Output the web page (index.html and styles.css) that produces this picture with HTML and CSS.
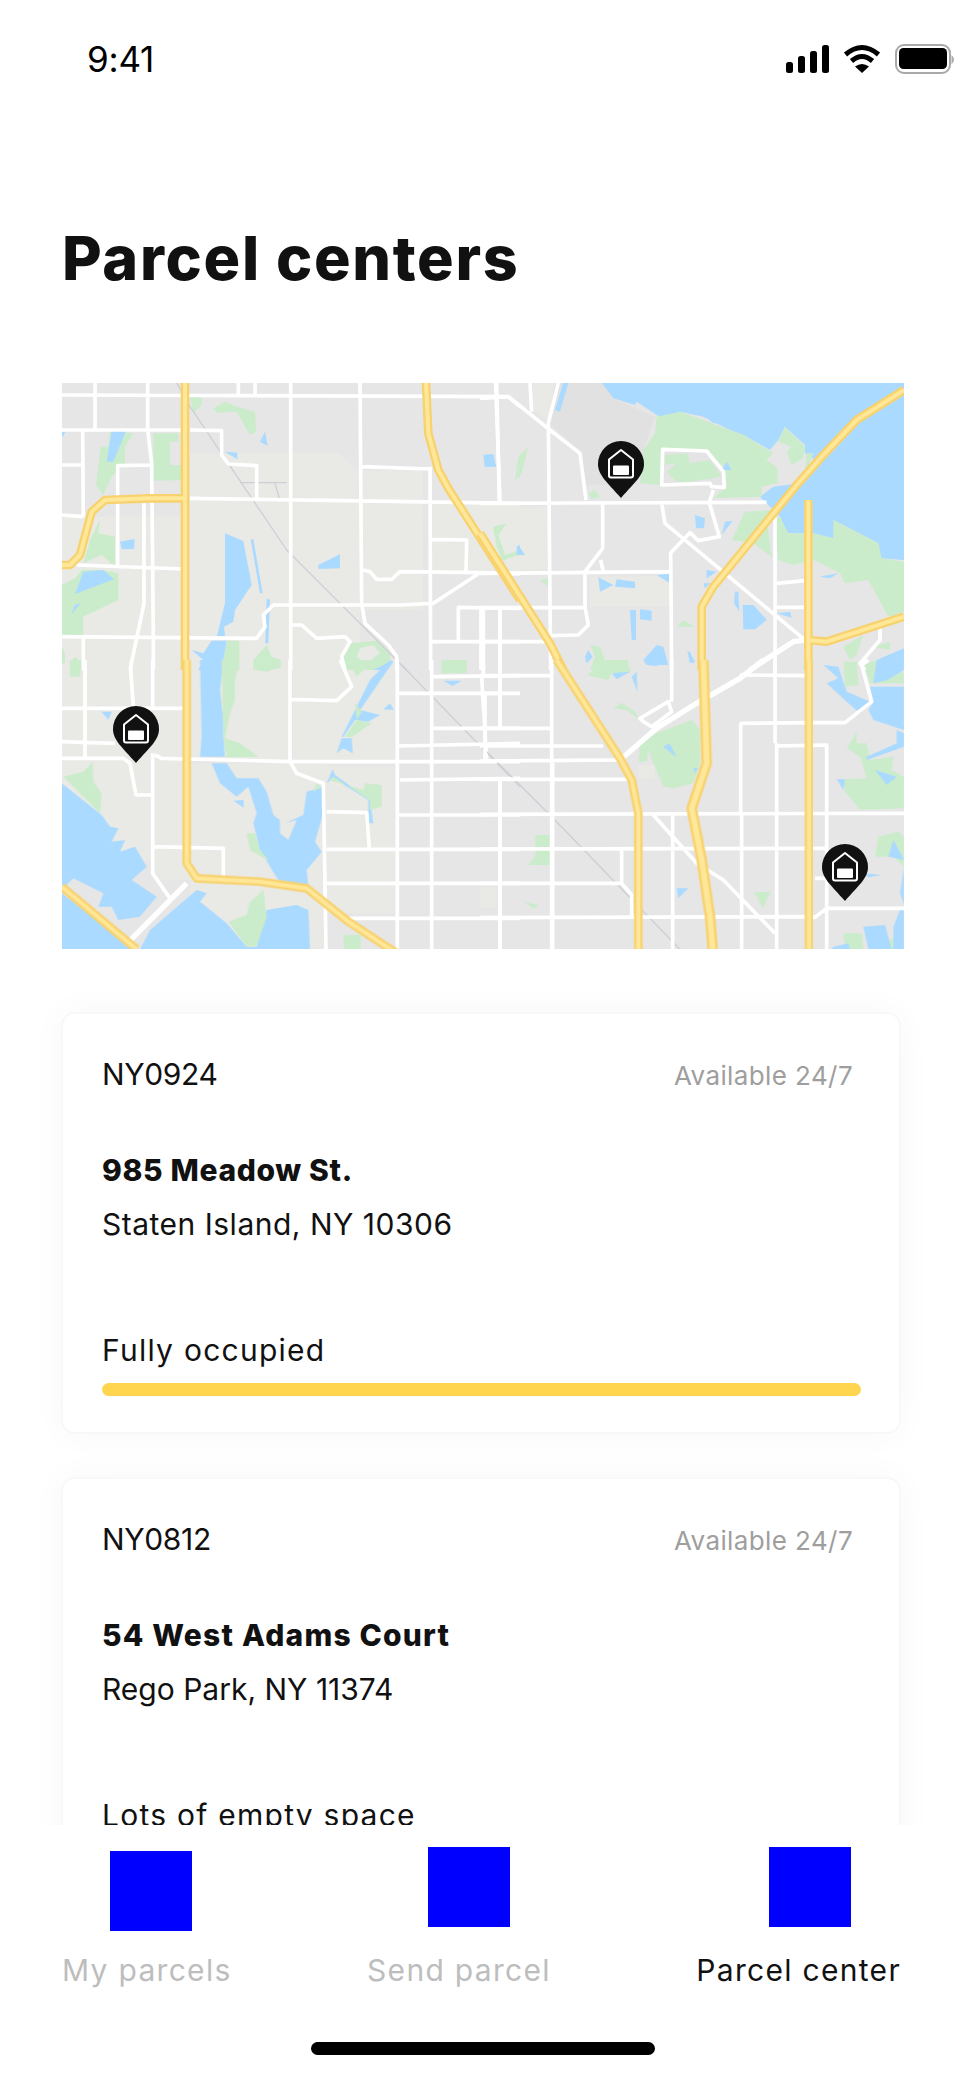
FILE: index.html
```html
<!DOCTYPE html>
<html lang="en">
<head>
<meta charset="utf-8">
<title>Parcel centers</title>
<link rel="stylesheet" href="styles.css">
</head>
<body>
<div class="phone">
  <div class="content">
    <header class="status">
      <span class="time">9:41</span>
      <svg class="status-icons" width="168" height="30" viewBox="0 0 168 30">
        <rect x="0" y="18" width="7" height="11" rx="2.5"/>
        <rect x="12" y="12" width="7" height="17" rx="2.5"/>
        <rect x="24" y="7" width="7" height="22" rx="2.5"/>
        <rect x="36" y="1" width="7" height="28" rx="2.5"/>
        <path class="wifi" d="M59.5 10.5Q76 -3.5 92.5 10.5"/>
        <path class="wifi" d="M65.5 17Q76 8 86.5 17"/>
        <path d="M69 22.5L76 29L83 22.5Q76 17.5 69 22.5Z"/>
        <rect class="batt-line" x="110" y="1" width="54" height="28" rx="8"/>
        <rect x="113" y="4" width="48" height="21" rx="4.5"/>
        <path class="batt-nub" d="M165.500 11Q168 13 168 15.500Q168 18 165.500 20Z"/>
      </svg>
    </header>
    <h1 class="title">Parcel centers</h1>
    <svg class="map" width="842" height="566" viewBox="62 383 842 566">
      <defs>
        <g id="pin">
          <path class="pin-body" d="M23 0A23 23 0 0 1 46 23C46 34 37 41 23 57C9 41 0 34 0 23A23 23 0 0 1 23 0Z"/>
          <path class="pin-line" d="M11 18.500L23 9L35 18.500V34.500Q35 36.500 33 36.500H13Q11 36.500 11 34.500Z"/>
          <rect class="pin-door" x="15" y="24.500" width="16" height="9.500" rx="1"/>
        </g>
      </defs>
      <rect x="62" y="383" width="842" height="566" class="land"/>

      <g class="map-art">
        <!-- soft land tints -->
        <g transform="translate(40 370) scale(.33333)">
          <path class="tint" d="M450 250L700 250L900 250L950 300L1150 300L1150 720L960 720L960 900L450 900ZM65 440L430 440L430 900L65 900ZM1170 400L1440 400L1440 610L1170 610Z"/>
        </g>
        <g transform="translate(480 370) scale(.33333)">
          <path class="dim" d="M220 38L365 38L400 85L525 140L490 240L470 340L320 345L300 240L205 160Z"/>
          <path class="tint" d="M0 410H210V600H0ZM160 38H225L205 150L160 120ZM330 620H570V710H330Z"/>
        </g>
        <g transform="translate(40 660) scale(.33333)">
          <path class="tint" d="M65 0H430V600H65ZM450 0H750V300H450ZM760 0H1070V300H760ZM450 310H860V870H450ZM860 320H1070V760H860ZM340 560H550V660H340Z"/>
        </g>
        <g transform="translate(480 660) scale(.33333)">
          <path class="tint" d="M0 680H50V745H0ZM475 315H525V355H475Z"/>
        </g>

        <!-- water and parks -->
        <g transform="translate(40 370) scale(.33333)">
          <path class="green" d="M450 80L485 80L485 105L460 130ZM520 115L555 95L590 110L645 125L648 185L630 195L590 125L530 128ZM210 185L280 190L255 230L255 280L215 320L190 375L168 345L182 230L205 230ZM340 190L415 190L415 215L390 215L390 285L430 285L430 330L340 332ZM65 645L105 625L125 600L190 600L235 610L235 690L130 740L130 800L65 800ZM180 450L175 490L225 500L225 590L185 555L130 580L150 510ZM1360 480L1395 462L1375 495L1395 555L1440 540V555L1385 570ZM1430 290L1440 270L1440 330ZM560 812L598 812L598 900L545 900ZM640 870L680 825L695 860L722 870L722 895L640 900ZM1205 870L1280 870L1280 900L1205 900ZM65 830L75 850L75 880L65 880ZM90 880L105 860L125 880L125 900L90 900ZM930 820L1010 812L1050 850L1050 880L1010 900L910 900L905 860Z"/>
          <path class="tint" d="M960 835L1000 825L1020 850L980 880L950 860Z"/>
          <path class="water" d="M215 183L258 183L220 275L200 275ZM65 185L77 185L65 205ZM660 215L675 185L683 228ZM555 245L592 248L592 268ZM1330 255L1360 253L1368 290L1335 290ZM240 515L283 507L283 537L245 538ZM835 585L900 553L900 595L835 597ZM555 490L610 513L635 645L585 720L580 755L552 770L555 800L530 800L555 700ZM632 508L640 508L668 670L660 670ZM680 685L690 690L685 820L676 820ZM130 605L190 600L222 628L105 672ZM95 733L105 705L122 700ZM455 840L490 850L515 812L560 812L545 900L475 900L490 870ZM1430 530L1440 525L1440 555L1430 555ZM1000 900L1050 875L1030 900Z"/>
        </g>
        <g transform="translate(480 370) scale(.33333)">
          <path class="water" d="M365 38L1272 38L1272 570L1200 565L1195 520L1060 450L1090 480L1060 505L1000 490L920 490L900 440L840 380L880 350L960 340L1020 280L975 250L975 225L915 170L895 210L870 240L790 195L750 180L670 140L600 125L545 145L470 95L465 105L400 85Z"/>
          <path class="green" d="M530 140L600 125L670 150L750 180L790 195L880 250L860 270L893 295L893 340L845 350L845 380L700 385L740 350L735 295L680 240L545 235L540 345L480 340L490 240L525 190ZM880 440L900 440L925 490L1000 490L1060 505L1060 450L1195 520L1205 565L1272 575L1272 725L1225 740L1165 630L1095 640L1080 610L1000 570L940 585L895 570ZM795 425L880 420L860 450L875 560L820 520L755 510ZM895 215L915 170L975 230L970 265L935 285L920 245L935 230ZM980 250L1000 250L985 290L975 300ZM105 330L115 260L145 230L125 310ZM40 470L80 460L55 495L75 555L110 550L70 572L50 530ZM590 770L610 750L645 770ZM180 630L205 625L205 650ZM330 825L360 830L375 870L445 870L445 895L330 900L345 860ZM1090 830L1150 795L1130 855L1110 870ZM1180 830L1230 815L1230 840ZM325 370L345 360L360 380L335 388Z"/>
          <path class="land-fill" d="M548 238L680 243L730 305L733 350L690 340L548 345Z"/>
          <path class="green" d="M555 255L620 250L630 280L690 270L725 320L630 335L590 335L560 305L590 280L555 285Z"/>
          <path class="water" d="M10 255L40 253L47 290L15 290ZM225 120L250 38L265 38L240 125ZM725 300L740 275L755 300ZM645 435L675 445L672 475L648 475ZM725 495L735 455L758 452ZM670 135L728 160L700 160ZM115 525L135 555L112 555ZM355 622L400 645L360 665ZM410 628L465 635L465 655L405 650ZM530 615L568 612L568 638ZM450 720H468V810H455ZM480 718L515 722V752L480 748ZM788 705H820L860 750L825 778H790ZM765 665H775L778 725L762 700ZM680 600L710 605L680 625ZM670 640H690L675 655ZM890 730L930 725L935 743ZM1020 620L1075 610L1050 625ZM490 870L530 825L550 830L565 885L510 885ZM315 860L325 840L338 862L320 878ZM622 845H630L645 878H630ZM1190 870L1272 835V875L1210 900Z"/>
        </g>
        <g transform="translate(40 660) scale(.33333)">
          <path class="water" d="M65 370L185 465L210 500L235 505L215 545L255 540L240 575L285 560L320 620L275 660L350 710L300 770L235 780L215 740L175 740L190 700L130 670L100 655L65 690ZM65 700L290 870H65ZM480 0H550L540 90L550 180V230L555 290H480L485 230ZM515 310H560L590 355H655L680 395L700 465L720 480V520L745 540L770 480L735 490L790 465L800 395L850 380V460L825 545L845 575L800 630L805 680L715 660L690 620L660 570L640 490L650 460L625 380L590 410L540 370ZM330 810L470 690L500 700L480 725L560 790L620 860H650L670 780L680 750L770 735L805 750L810 868H300ZM185 155H215L205 180ZM1210 62H1265L1238 78ZM890 280L905 235H935L938 280L910 265ZM905 230L990 60L1050 0L1060 5L960 150L1020 165L985 185L945 180L910 230ZM1030 148L1050 130L1062 150ZM860 370L878 328L885 345L990 420L1000 490H985V420L880 355ZM580 422L610 420L612 443Z"/>
          <path class="green" d="M545 0H598L585 60V120L570 160L555 235L600 250L655 290L560 292L550 235ZM70 350L130 335L158 305L160 365L185 400L180 460ZM620 520H645L660 570L690 605L630 570ZM565 785L620 765L630 725L670 690L680 770L650 860H620ZM868 360L970 390L975 370L1025 375V440L990 450V420L880 350ZM910 825H962V868H912ZM90 0H125L120 50H90ZM645 0H720V20L680 35L645 30ZM915 230L950 180L995 190L935 232ZM1205 0H1280V40H1205ZM945 130L965 155L950 180ZM925 0H1000L950 50ZM830 370L845 380L820 395Z"/>
        </g>
        <g transform="translate(480 660) scale(.33333)">
          <path class="green" d="M320 45L355 20L365 0L380 15L450 20V38L395 40L385 60L340 50ZM475 305L480 245L530 220L635 180L660 210V310L640 370L580 385L550 380L520 310L505 270L500 305ZM400 145L425 128L465 155L478 180L440 150ZM145 615L165 590V525H210V615ZM133 725L175 735L160 747ZM822 697L872 695L848 745ZM1185 590L1195 530L1255 515L1272 530V620L1240 590ZM1100 265L1130 215V250H1160L1170 300L1240 290L1235 330L1272 350V445L1140 450L1095 395L1090 358L1160 355L1140 290ZM1090 820H1145L1150 868H1095ZM1185 868L1240 835V868ZM1090 5H1130L1135 75L1095 80ZM1150 15L1190 0L1240 20L1272 40V70H1170Z"/>
          <path class="water" d="M1030 15L1075 20L1100 95L1170 125L1140 160L1100 125L1040 70L1075 55ZM1190 0H1272V30L1222 60L1180 70ZM1170 80H1272V210L1180 180L1165 150L1180 125ZM1160 290L1250 250V210L1272 220V260L1160 300ZM1185 330L1250 350L1220 375ZM1070 358H1095L1090 390ZM550 260L568 250L590 292ZM640 325H655L645 340ZM590 685H625L595 715ZM455 50L470 35L472 95ZM395 40L450 35L410 58ZM490 0H560L530 18L500 15ZM1150 640L1205 645L1165 652ZM1260 700L1272 620V735ZM1240 540L1272 600L1225 590ZM1150 800L1215 795L1235 868H1165ZM1060 860L1105 850L1110 868H1055ZM1260 750H1272V868H1240V800ZM315 0H330L320 8ZM625 0H645L635 8Z"/>
        </g>

        <!-- railway and streets -->
        <g transform="translate(40 370) scale(.33333)">
          <path class="rail" d="M410 38L450 110L740 540L1100 900M600 338H740M705 340L718 385"/>
          <path class="road" d="M65 75L1405 80L1440 110M165 38V180M323 38V180L335 280L340 800V900M595 38V75M645 38V75M752 38V900M960 38L965 700L975 760L1045 825L1070 860V900M1367 38L1380 395M65 180H430M450 180L545 182V255L565 282L650 287V385M128 180L130 440M65 285H128M65 435L130 440M233 590V287L335 285M450 385L1440 400M965 290L1170 297M1170 290L1172 900M1175 508L1280 510L1278 605M970 600L990 605L1010 628H1055L1080 605L1320 608L1180 700L1080 705H700L670 735L675 770L650 805L65 800M1320 608L1440 612M755 765H785L830 805L915 800L930 815L905 860L915 900M1255 810V712L1440 715M1330 715V900M1380 720V900M1175 815H1440M110 585L430 597M130 805V900M312 400V700L270 900"/>
        </g>
        <g transform="translate(480 370) scale(.33333)">
          <path class="road" d="M0 85L85 80L210 180L300 250L318 390M50 38L58 395M150 38L155 125M235 38L205 160L212 900M0 400L860 397M368 400V535L315 605V710L325 765L295 795L215 797M362 570L370 605M0 610L570 605M0 713L320 713M0 815L210 815M3 713V900M60 720V900M545 400L555 460L975 810M690 405L718 500L655 512L630 488L572 548L575 900M685 405L700 360M548 238L680 243L730 305L733 352L695 350L690 340L545 345ZM885 440V900M890 640L975 632M888 712H975M1200 770V810L1140 880L1155 900"/>
          <path class="road-wide" d="M810 900L870 860L940 815L975 810"/>
        </g>
        <g transform="translate(40 660) scale(.33333)">
          <path class="rail" d="M1075 5L1440 380"/>
          <path class="road" d="M65 145H430M65 245L225 250M135 0V290M65 295H250L270 310L288 405H338M275 0L272 30L280 140M338 0V140M338 280V640L390 715M338 560L550 565V660M345 285L365 295L430 297M450 297L750 305L770 340L850 370L858 868M750 0V305M755 118L890 122L935 80L905 10L900 0M750 305L1440 305M1072 0V868M1072 100H1440M1072 258L1440 250M1175 0V868M1180 50L1440 47M1325 50L1340 300M1380 50V200M1180 205H1440M860 455L980 458L988 565M860 568H1440M1080 360L1440 355M1380 360V868M860 670H1440M925 775H1440M1072 465H1440M1330 0V50"/>
          <path class="road-wide" d="M272 840L440 670"/>
        </g>
        <g transform="translate(480 660) scale(.33333)">
          <path class="rail" d="M20 275L210 465L600 868"/>
          <path class="road" d="M0 47H215M215 0V868M0 100H60M0 205H220M60 0V205M15 100V300M0 258H370M480 175L565 125L575 155L515 200L490 185ZM575 0V125M885 0V250M780 45L975 47M780 190L1000 188H1095L1175 125L1145 15L1165 0M782 190V460M890 258L1040 255V868M890 250V868M0 358H445M60 365V868M218 310V868M0 463L1272 460M520 465L650 610L730 660L885 820M578 465V868M785 460V868M0 567L1040 565M425 570V670L455 705V770M0 670H420M0 773L990 770L1005 772L1040 745H1272M1005 655H1040M0 303L415 300"/>
          <path class="road-wide" d="M420 300L530 205L650 130L780 55L850 0"/>
        </g>

        <!-- highways -->
        <g transform="translate(40 370) scale(.33333)">
          <path class="hw" d="M435 38V900M435 385L330 385L195 390L155 425L120 555L90 585H65M1158 38L1165 190L1195 300L1225 355L1440 690"/>
          <path class="hw-in" d="M435 38V900M435 385L330 385L195 390L155 425L120 555L90 585H65M1158 38L1165 190L1195 300L1225 355L1440 690"/>
        </g>
        <g transform="translate(480 370) scale(.33333)">
          <path class="hw" d="M1272 60L1130 150L1030 255L950 345L700 650L665 710V900M985 390V900M985 810L1040 815L1272 740M0 490L210 820L250 900"/>
          <path class="hw-in" d="M1272 60L1130 150L1030 255L950 345L700 650L665 710V900M985 390V900M985 810L1040 815L1272 740M0 490L210 820L250 900"/>
        </g>
        <g transform="translate(40 660) scale(.33333)">
          <path class="hw" d="M440 0V610L470 655L660 665L800 685L925 785L1070 880M65 680L290 868"/>
          <path class="hw-in" d="M440 0V610L470 655L660 665L800 685L925 785L1070 880M65 680L290 868"/>
        </g>
        <g transform="translate(480 660) scale(.33333)">
          <path class="hw" d="M230 0L420 295L455 360L475 460V868M987 0V868"/>
          <path class="hw-in" d="M230 0L420 295L455 360L475 460V868M987 0V868"/>
          <path class="hw hw-big" d="M670 0L680 310L635 445L665 600L690 770L698 868"/>
          <path class="hw-in hw-in-big" d="M670 0L680 310L635 445L665 600L690 770L698 868"/>
        </g>
      </g>

      <use href="#pin" x="598" y="441"/>
      <use href="#pin" x="113" y="706"/>
      <use href="#pin" x="822" y="844"/>
    </svg>

    <section class="cards">
      <article class="card">
        <div class="card-top">
          <span class="code">NY0924</span>
          <span class="hours">Available 24/7</span>
        </div>
        <div class="street">985 Meadow St.</div>
        <div class="city">Staten Island, NY 10306</div>
        <div class="occupancy">Fully occupied</div>
        <div class="bar"></div>
      </article>
      <article class="card">
        <div class="card-top">
          <span class="code">NY0812</span>
          <span class="hours">Available 24/7</span>
        </div>
        <div class="street street-long">54 West Adams Court</div>
        <div class="city city-short">Rego Park, NY 11374</div>
        <div class="occupancy">Lots of empty space</div>
      </article>
    </section>
  </div>

  <nav class="tabbar">
    <div class="tabs">
      <div class="tab tab-first">
        <div class="tab-icon"></div>
        <span class="tab-label">My parcels</span>
      </div>
      <div class="tab tab-second">
        <div class="tab-icon"></div>
        <span class="tab-label">Send parcel</span>
      </div>
      <div class="tab tab-third tab-active">
        <div class="tab-icon"></div>
        <span class="tab-label">Parcel center</span>
      </div>
    </div>
    <div class="home-bar"></div>
  </nav>
</div>
</body>
</html>
```

FILE: styles.css
```css
* { box-sizing: border-box; }
html, body { margin: 0; padding: 0; background: #fff; }
body { font-family: "Inter", "Liberation Sans", sans-serif; color: #111; }

.phone { width: 963px; height: 2085px; display: flex; flex-direction: column; overflow: hidden; background: #fff; }
.content { flex: 1 1 0; min-height: 0; overflow: hidden; }

.status { height: 118px; display: flex; justify-content: space-between; align-items: center; padding: 0 9px 0 87px; }
.time { font-size: 35px; line-height: 44px; font-weight: 400; letter-spacing: -.2px; color: #000; }
.status-icons { display: block; fill: #000; }
.wifi { fill: none; stroke: #000; stroke-width: 5; }
.batt-line { fill: none; stroke: #a9a9a9; stroke-width: 2; }
.batt-nub { fill: #a9a9a9; }

.title { margin: 104px 0 0 62px; height: 73px; font-size: 61px; line-height: 72px; font-weight: 800; letter-spacing: 1.7px; color: #111; white-space: nowrap; }

.map { display: block; margin: 88px 0 0 62px; }
.map-art { filter: blur(.5px); }
.land { fill: #e6e6e6; }
.land-fill { fill: #e4e4e4; }
.tint { fill: #e9e9e6; }
.dim { fill: #e1e1e1; }
.water { fill: #aadaff; }
.green { fill: #cbeccb; }
.road, .road-wide, .rail, .hw, .hw-in, .pin-line { fill: none; stroke-linejoin: round; }
.road { stroke: #fff; stroke-width: 11; }
.road-wide { stroke: #fff; stroke-width: 16; }
.rail { stroke: #cdcfd6; stroke-width: 4; }
.hw { stroke: #f8d26f; stroke-width: 26; }
.hw-in { stroke: #ffe798; stroke-width: 12; }
.hw-big { stroke-width: 32; }
.hw-in-big { stroke-width: 17; }
.pin-body { fill: #111; }
.pin-line { stroke: #fff; stroke-width: 2; }
.pin-door { fill: #fff; }

.cards { margin: 63px 0 0 61px; width: 840px; display: flex; flex-direction: column; gap: 43px; }
.card { height: 422px; flex: none; padding: 40px 38px 0 39px; background: #fff; border: 2px solid #f8f8f8; border-radius: 14px; box-shadow: 0 0 34px rgba(0, 0, 0, .035); }
.card-top { display: flex; justify-content: space-between; align-items: baseline; padding-right: 8px; }
.code, .street, .city, .occupancy { display: block; font-size: 30px; line-height: 40px; white-space: nowrap; color: #111; }
.code { letter-spacing: -.35px; }
.hours { font-size: 26px; line-height: 40px; color: #9e9e9e; white-space: nowrap; letter-spacing: .4px; }
.street { margin-top: 54px; font-weight: 800; letter-spacing: .65px; }
.street-long { letter-spacing: 1.2px; }
.city { margin-top: 14px; letter-spacing: .5px; }
.city-short { letter-spacing: 0; }
.occupancy { margin-top: 86px; letter-spacing: 1.25px; }
.bar { height: 13px; margin-top: 13px; background: #ffd54f; border-radius: 7px; }

.tabbar { flex: none; height: 260px; background: #fff; position: relative; }
.tabs { display: flex; justify-content: space-between; padding: 0 62px; height: 166px; }
.tab { display: flex; flex-direction: column; align-items: flex-start; }
.tab-second { margin-right: 10px; }
.tab-icon { width: 82px; height: 80px; background: #00f; flex: none; }
.tab-first .tab-icon { margin: 26px 0 19px 48px; }
.tab-second .tab-icon { margin: 22px 0 23px 61px; }
.tab-third .tab-icon { margin: 22px 0 23px 73px; }
.tab-label { font-size: 30px; line-height: 40px; color: #bdbdbd; white-space: nowrap; letter-spacing: 1.3px; }
.tab-active .tab-label { color: #111; }
.home-bar { width: 344px; height: 13px; margin: 51px 0 0 311px; background: #000; border-radius: 7px; }
```
